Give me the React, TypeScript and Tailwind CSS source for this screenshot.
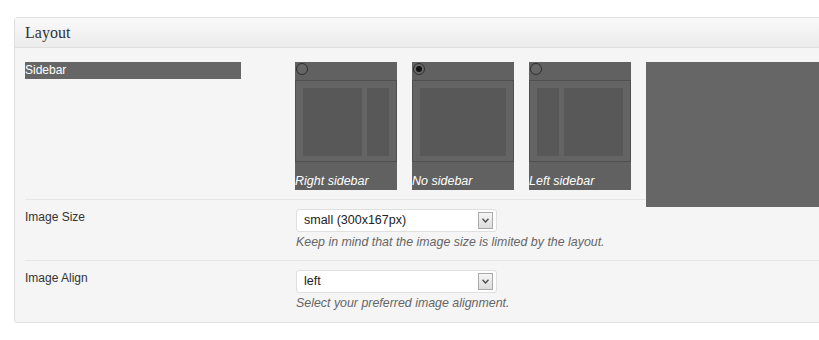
import React from 'react';

type SidebarOption = {
  id: string;
  label: string;
  kind: 'right' | 'none' | 'left';
  checked: boolean;
};

const options: SidebarOption[] = [
  { id: 'right', label: 'Right sidebar', kind: 'right', checked: false },
  { id: 'none', label: 'No sidebar', kind: 'none', checked: true },
  { id: 'left', label: 'Left sidebar', kind: 'left', checked: false },
];

const Radio: React.FC<{ checked: boolean }> = ({ checked }) => (
  <span className="ml-px mt-px flex h-[12px] w-[12px] items-center justify-center rounded-full border border-[#2f2f2f] bg-[#666]">
    {checked && <span className="h-[6px] w-[6px] rounded-full bg-[#111]" />}
  </span>
);

const LayoutCard: React.FC<{ option: SidebarOption }> = ({ option }) => (
  <label className="flex h-[128px] w-[102px] cursor-pointer flex-col bg-[#616161]">
    <div className="h-[19px] border-b border-[#4f4f4f]">
      <Radio checked={option.checked} />
    </div>
    <div className="flex h-[81px] gap-[5px] border-x border-b border-[#4f4f4f] bg-[#646464] px-[7px] pb-[5px] pt-[7px]">
      {option.kind === 'left' && <div className="w-[22px] bg-[#585858]" />}
      <div className="flex-1 bg-[#585858]" />
      {option.kind === 'right' && <div className="w-[22px] bg-[#585858]" />}
    </div>
    <div className="mt-auto pb-px text-[12.5px] italic leading-[15px] text-white">{option.label}</div>
  </label>
);

const SelectField: React.FC<{ value: string; help: string }> = ({ value, help }) => (
  <div className="flex flex-col">
    <div className="flex h-[23px] w-[201px] items-center justify-between rounded-[3px] border border-[#dfdfdf] bg-white pl-[7px] pr-[3px]">
      <span className="text-[12.5px] text-[#222]">{value}</span>
      <span className="flex h-[17px] w-[15px] items-center justify-center border border-[#a9a9a9] bg-gradient-to-b from-[#f6f6f6] to-[#dcdcdc]">
        <svg width="7" height="5" viewBox="0 0 7 5">
          <path d="M0.5 0.8 L3.5 4 L6.5 0.8" fill="none" stroke="#4d4d4d" strokeWidth="1.4" />
        </svg>
      </span>
    </div>
    <p className="mt-[3px] text-[12.4px] italic leading-[15px] text-[#666]">{help}</p>
  </div>
);

export default function App() {
  return (
    <div className="h-[340px] w-[819px] overflow-hidden bg-white pt-[17px] font-['Liberation_Sans',Arial,sans-serif]">
      <div className="ml-[14px] w-[840px] rounded-[3px] border border-[#dfdfdf] bg-[#f5f5f5]">
        <div className="flex h-[30px] items-center border-b border-[#dfdfdf] bg-gradient-to-b from-[#f9f9f9] to-[#ececec] px-[10px]">
          <h3 className="font-['Liberation_Serif',Georgia,serif] text-[16px] text-[#333]">Layout</h3>
        </div>

        <div className="ml-[10px]">
          <div className="flex border-b border-[#e6e6e6] pb-[9px] pt-[14px]">
            <div className="w-[270px]">
              <div className="h-[17px] w-[216px] bg-[#666] text-[12px] leading-[17px] text-white">Sidebar</div>
            </div>
            <div className="flex items-start gap-[15px]">
              {options.map((o) => (
                <LayoutCard key={o.id} option={o} />
              ))}
              <div className="relative z-10 -mb-[17px] h-[145px] w-[200px] bg-[#666]" />
            </div>
          </div>

          <div className="flex border-b border-[#e6e6e6] pb-[10px] pt-[9px]">
            <div className="w-[271px] pt-[1px] text-[12px] leading-[15px] text-[#333]">Image Size</div>
            <SelectField value="small (300x167px)" help="Keep in mind that the image size is limited by the layout." />
          </div>

          <div className="flex pb-[11px] pt-[9px]">
            <div className="w-[271px] pt-[1px] text-[12px] leading-[15px] text-[#333]">Image Align</div>
            <SelectField value="left" help="Select your preferred image alignment." />
          </div>
        </div>
      </div>
    </div>
  );
}
